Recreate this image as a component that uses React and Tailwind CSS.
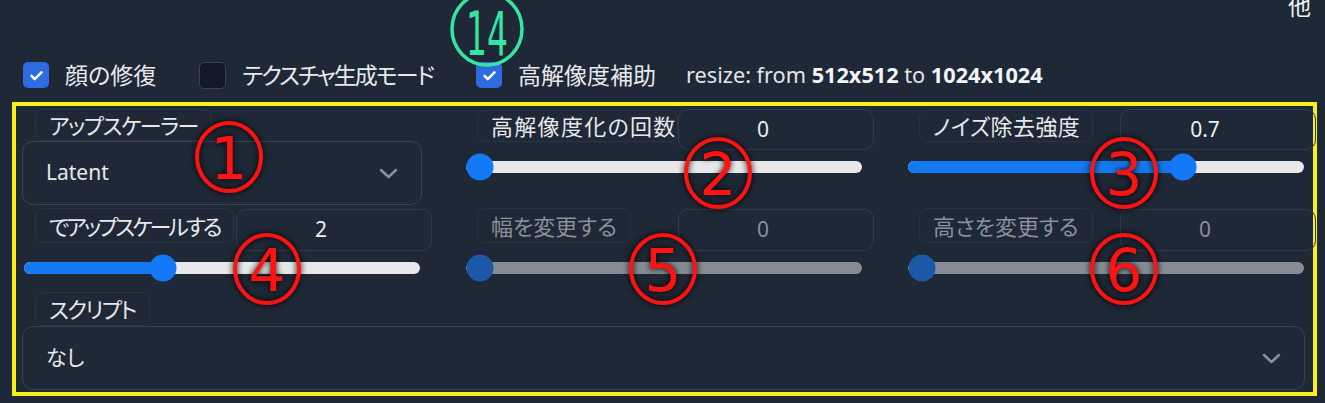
import React from 'react';

const FONT = "font-['Noto_Sans','Noto_Sans_CJK_JP',sans-serif] [font-feature-settings:'palt']";

const Check = () => (
  <svg viewBox="0 0 24 24" className="w-[17px] h-[17px]" fill="none" stroke="white" strokeWidth="3.6" strokeLinecap="round" strokeLinejoin="round">
    <path d="M5 12.5l4.5 4.5L19 7.5" />
  </svg>
);

const Checkbox = ({ checked, label, className = '', textClass = '' }) => (
  <div className={`flex items-center ${className}`}>
    {checked ? (
      <div className="w-[26px] h-[26px] rounded-[5px] bg-[#2e6be0] flex items-center justify-center">
        <Check />
      </div>
    ) : (
      <div className="w-[27px] h-[27px] rounded-[5px] bg-[#121826] border border-[#3a4250]" />
    )}
    <span className={`ml-[16px] text-[23px] leading-none text-[#e8eaee] ${textClass}`}>{label}</span>
  </div>
);

const Chevron = () => (
  <svg width="19" height="11" viewBox="0 0 19 11" fill="none" stroke="#8b929c" strokeWidth="2.4" strokeLinecap="round" strokeLinejoin="round">
    <polyline points="2,2 9.5,9 17,2" />
  </svg>
);

const Label = ({ text, disabled, className = '' }) => (
  <div
    className={`ml-[13px] pl-[13px] flex items-center rounded-[8px] border border-[#2a3341] text-[22px] leading-none whitespace-nowrap shrink-0 ${
      disabled ? 'text-[#8a909a]' : 'text-[#e6e8ec]'
    } ${className}`}
  >
    {text}
  </div>
);

const NumberBox = ({ value, disabled, className = '' }) => (
  <div
    className={`ml-auto w-[196px] shrink-0 rounded-[10px] border border-[#323b49] flex items-center justify-center pr-[26px] text-[21px] ${
      disabled ? 'text-[#8a909a]' : 'text-[#eceef1]'
    } ${className}`}
  >
    {value}
  </div>
);

const Slider = ({ pct, disabled }) => {
  const left = 13.5 + pct * 370;
  return (
    <div className="h-[34px] flex items-center px-[2px]">
      <div className={`relative w-[397px] h-[12px] rounded-full ${disabled ? 'bg-[#878c94]' : 'bg-[#e8e8ea]'}`}>
        {!disabled && <div className="absolute left-0 top-0 h-full rounded-full bg-[#1478f2]" style={{ width: left }} />}
        <div
          className={`absolute top-1/2 -translate-y-1/2 -translate-x-1/2 w-[27px] h-[27px] rounded-full ${disabled ? 'bg-[#1b58a8]' : 'bg-[#1479f7]'}`}
          style={{ left }}
        />
      </div>
    </div>
  );
};

const SliderBlock = ({ label, value, pct, disabled, top, labelClass = 'pr-[13px]' }) => (
  <div className="w-[400px]">
    <div className="flex w-[410px] items-start">
      <Label
        text={label}
        disabled={disabled}
        className={`${top ? 'mt-[1px] h-[32px]' : 'mt-[1px] h-[35px]'} ${labelClass}`}
      />
      <NumberBox value={value} disabled={disabled} className={top ? 'h-[41px]' : 'mt-[2px] h-[42px]'} />
    </div>
    <Slider pct={pct} disabled={disabled} />
  </div>
);

const Dropdown = ({ value, className = '' }) => (
  <div className={`h-[64px] rounded-[11px] border border-[#394250] flex items-center justify-between pl-[23px] pr-[23px] ${className}`}>
    <span className="text-[21px] text-[#e6e8ec]">{value}</span>
    <Chevron />
  </div>
);

const Circled = ({ n, className }) => (
  <svg
    width="80"
    height="84"
    viewBox="0 0 80 84"
    className={`absolute drop-shadow-[0_0_3px_#000] ${className}`}
  >
    <ellipse cx="40" cy="42" rx="32" ry="34" fill="none" stroke="#ff1212" strokeWidth="4" />
    <text x="40" y="44" textAnchor="middle" dominantBaseline="central" fontSize="58" fill="#ff1212" fontFamily="DejaVu Sans, sans-serif">
      {n}
    </text>
  </svg>
);

export default function App() {
  return (
    <div className={`relative w-[1325px] h-[403px] overflow-hidden bg-[#1f2836] ${FONT}`}>
      {/* top tab corner */}
      <div className="h-[50px] flex justify-end pr-[14px]">
        <span className="-mt-[5px] text-[23px] leading-none text-[#eef0f3]">他</span>
      </div>

      {/* checkbox row */}
      <div className="h-[50px] flex items-center pl-[23px]">
        <Checkbox checked label="顔の修復" />
        <Checkbox label="テクスチャ生成モード" className="ml-[43px]" textClass="tracking-[-1.9px]" />
        <Checkbox checked label="高解像度補助" className="ml-[43px]" />
        <span className="ml-[30px] text-[21.7px] leading-none text-[#e2e5ea]">
          resize: from <b className="font-bold text-[#f3f4f6]">512x512</b> to <b className="font-bold text-[#f3f4f6]">1024x1024</b>
        </span>
      </div>

      {/* highlighted hires panel */}
      <div className="ml-[12px] mt-[2px] w-[1305px] h-[294px] border-4 border-[#f7ef1e] pl-[6px] pt-[3px]">
        <div className="grid grid-cols-[400px_400px_400px] gap-x-[42px]">
          <div className="h-[98px]">
            <Label text="アップスケーラー" className="h-[32px] w-fit pr-[13px] tracking-[-1.5px]" />
            <Dropdown value="Latent" />
          </div>
          <SliderBlock top label="高解像度化の回数" value="0" pct={0} labelClass="pr-0 tracking-[1.3px]" />
          <SliderBlock top label="ノイズ除去強度" value="0.7" pct={0.707} labelClass="pr-[12px] tracking-[0.4px]" />

          <div className="h-[85px]">
            <SliderBlock label="でアップスケールする" value="2" pct={0.34} labelClass="pr-[13px] tracking-[-3px]" />
          </div>
          <SliderBlock disabled label="幅を変更する" value="0" pct={0} />
          <SliderBlock disabled label="高さを変更する" value="0" pct={0} />
        </div>

        <Label text="スクリプト" className="h-[34px] w-fit pr-[13px] tracking-[-1.6px]" />
        <Dropdown value="なし" className="w-[1283px]" />
      </div>

      {/* annotations */}
      <Circled n="1" className="left-[189px] top-[115px]" />
      <Circled n="2" className="left-[678px] top-[131px]" />
      <Circled n="3" className="left-[1084px] top-[131px]" />
      <Circled n="4" className="left-[227px] top-[227px]" />
      <Circled n="5" className="left-[623px] top-[227px]" />
      <Circled n="6" className="left-[1084px] top-[227px]" />

      <svg width="80" height="80" viewBox="0 0 80 80" className="absolute left-[447px] -top-[11px]">
        <ellipse cx="40" cy="40" rx="35" ry="36" fill="none" stroke="#35e6a3" strokeWidth="3.5" />
        <text
          x="0"
          y="0"
          transform="translate(40 45) scale(0.55 1)"
          textAnchor="middle"
          dominantBaseline="central"
          fontSize="60"
          fill="#35e6a3"
          fontFamily="DejaVu Sans, sans-serif"
        >
          14
        </text>
      </svg>
    </div>
  );
}
